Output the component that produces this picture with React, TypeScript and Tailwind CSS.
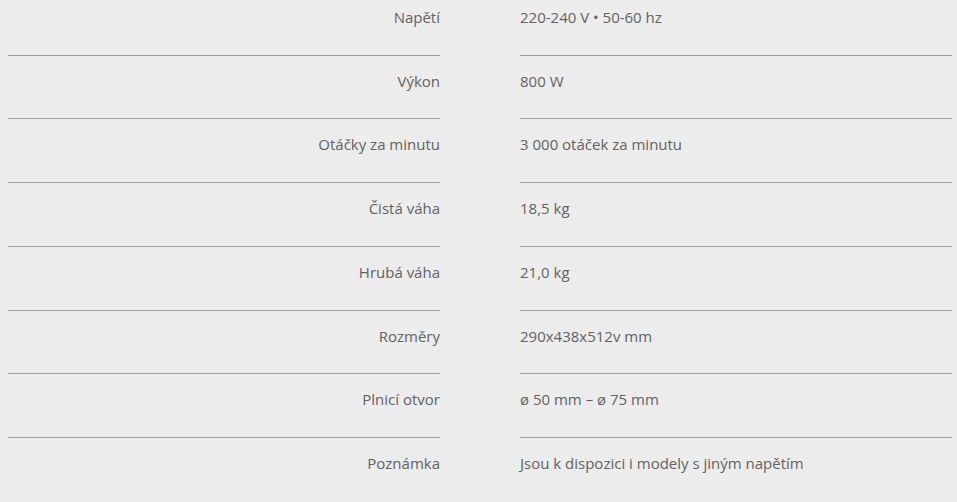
const specs: [string, string][] = [
  ['Napětí', '220-240 V • 50-60 hz'],
  ['Výkon', '800 W'],
  ['Otáčky za minutu', '3 000 otáček za minutu'],
  ['Čistá váha', '18,5 kg'],
  ['Hrubá váha', '21,0 kg'],
  ['Rozměry', '290x438x512v mm'],
  ['Plnicí otvor', 'ø 50 mm – ø 75 mm'],
  ['Poznámka', 'Jsou k dispozici i modely s jiným napětím'],
]

export default function App() {
  return (
    <div className="w-[957px] h-[502px] overflow-hidden bg-[#ececec] font-['Open_Sans',sans-serif] text-[15px] leading-[19.7px] text-[#636363]">
      <div className="-mt-[8px] pl-[8px] grid grid-cols-[432px_432px] gap-x-[80px]">
        {specs.map(([label, value], i) => {
          const last = i === specs.length - 1
          const border = last ? '' : 'border-b border-[#9e9e9e]'
          return (
            <div key={label} className="contents">
              <div className={`pt-[16px] pb-[27px] text-right ${border}`}>{label}</div>
              <div className={`pt-[16px] pb-[27px] ${border}`}>{value}</div>
            </div>
          )
        })}
      </div>
    </div>
  )
}
